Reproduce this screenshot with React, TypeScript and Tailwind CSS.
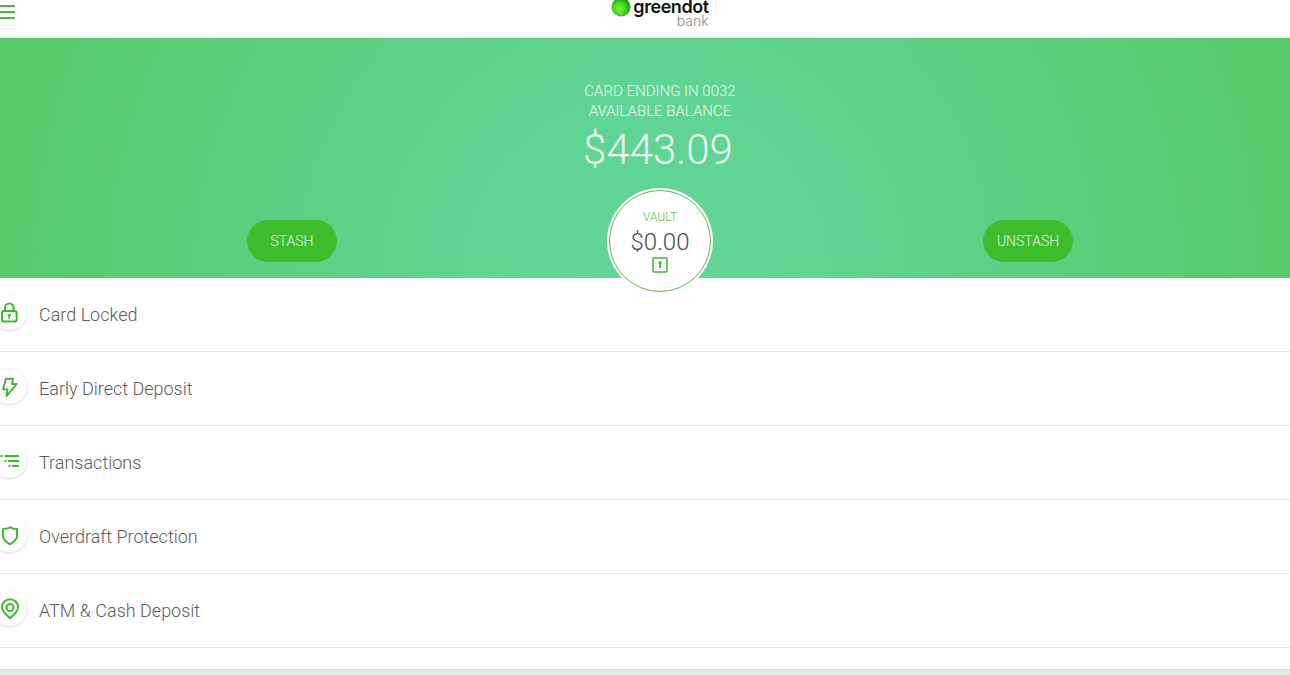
import type { ReactNode } from "react";

function LockIcon() {
  return (
    <svg viewBox="0 0 24 24" className="h-6 w-6" fill="none" stroke="#3cbb2c" strokeWidth="2" aria-hidden="true">
      <rect x="4" y="10" width="14.600" height="10.600" rx="1.800" />
      <path d="M7 10V6.800a4.300 4.300 0 0 1 8.600 0V10" />
      <path d="M9.600 13.200H13v2h-1V18h-1.500v-2.800h-.9z" fill="#3cbb2c" stroke="none" />
    </svg>
  );
}

function BoltIcon() {
  return (
    <svg viewBox="0 0 24 24" className="h-6 w-6" fill="none" stroke="#3cbb2c" strokeWidth="1.900" strokeLinejoin="round" aria-hidden="true">
      <path d="M8 3.800h7l-1 5.200h4.600L8.600 21.200l.8-6.800H5z" />
    </svg>
  );
}

function ListIcon() {
  return (
    <svg viewBox="0 0 24 24" className="h-6 w-6" fill="none" stroke="#3cbb2c" strokeWidth="2" aria-hidden="true">
      <path d="M6.500 7H21M10 12h11M14 17h7" />
      <path d="M2.500 7h2M6.500 12h2M10.500 17h2" />
    </svg>
  );
}

function ShieldIcon() {
  return (
    <svg viewBox="0 0 24 24" className="h-6 w-6" fill="none" stroke="#3cbb2c" strokeWidth="2" strokeLinejoin="round" aria-hidden="true">
      <path d="M12 4.200c-2 1.400-4.200 1.800-7 1.800v6.800c0 4 3.400 6.500 7 8.500 3.600-2 7-4.500 7-8.500V6c-2.800 0-5-.4-7-1.800z" />
    </svg>
  );
}

function PinIcon() {
  return (
    <svg viewBox="0 0 24 24" className="h-6 w-6" fill="none" stroke="#3cbb2c" strokeWidth="2" strokeLinejoin="round" aria-hidden="true">
      <path d="M12 21.400c-2.800-3-8-6.600-8-11.200a8 8 0 0 1 16 0c0 4.600-5.200 8.200-8 11.200z" />
      <circle cx="12" cy="10.600" r="3.500" />
    </svg>
  );
}

function VaultIcon() {
  return (
    <svg viewBox="0 0 16 16" className="h-4 w-4" fill="none" stroke="#3cbb2c" strokeWidth="1.500" aria-hidden="true">
      <rect x="1" y="1" width="14" height="14" rx="1" />
      <path d="M6.300 6a1.700 1.700 0 1 1 3.400 0c0 .6-.5 1-.8 1.200V11H7.100V7.200C6.800 7 6.300 6.600 6.300 6z" fill="#3cbb2c" stroke="none" />
    </svg>
  );
}

function BrandDot() {
  return (
    <svg viewBox="0 0 20 20" className="h-5 w-5" aria-hidden="true">
      <defs>
        <radialGradient id="dot" cx="0.42" cy="0.6" r="0.65">
          <stop offset="0" stopColor="#7df03c" />
          <stop offset="0.5" stopColor="#43d81f" />
          <stop offset="1" stopColor="#178a12" />
        </radialGradient>
      </defs>
      <circle cx="10" cy="10" r="9.500" fill="url(#dot)" />
    </svg>
  );
}

const items: { label: string; icon: ReactNode }[] = [
  { label: "Card Locked", icon: <LockIcon /> },
  { label: "Early Direct Deposit", icon: <BoltIcon /> },
  { label: "Transactions", icon: <ListIcon /> },
  { label: "Overdraft Protection", icon: <ShieldIcon /> },
  { label: "ATM & Cash Deposit", icon: <PinIcon /> },
];

function Header() {
  return (
    <header className="relative flex h-[38px] items-start justify-center bg-white pl-[30px]">
      <button type="button" aria-label="Menu" className="absolute top-[5px] left-0 flex w-[15px] flex-col gap-1">
        <span className="h-0.5 bg-[#4cb83c]" />
        <span className="h-0.5 bg-[#4cb83c]" />
        <span className="h-0.5 bg-[#4cb83c]" />
      </button>
      <a href="#home" className="flex items-start gap-0.5 font-['Inter',sans-serif]">
        <span className="-mt-[3px]">
          <BrandDot />
        </span>
        <span className="flex flex-col items-end">
          <span className="text-[18px] leading-[14px] font-semibold tracking-tight text-[#111]">greendot</span>
          <span className="text-[14px] leading-[14px] font-light text-[#8a8a8a]">bank</span>
        </span>
      </a>
    </header>
  );
}

function PillButton({ children }: { children: ReactNode }) {
  return (
    <button type="button" className="h-[42px] w-[90px] rounded-full bg-[#3dbd2b] text-[14px] font-light text-[#e4fbe0]">
      {children}
    </button>
  );
}

function Hero() {
  return (
    <section className="h-[240px] bg-[radial-gradient(circle_farthest-side_at_bottom,#62d59a_0%,#60d494_25%,#55cb6b_100%)] pl-[30px]">
      <div className="pt-[43px] text-center font-light text-[#e9fbf0]">
        <p className="text-[15px] leading-5">CARD ENDING IN 0032</p>
        <p className="text-[15px] leading-5">AVAILABLE BALANCE</p>
        <p className="pr-1 text-[42px] leading-[58px]">$443.09</p>
      </div>
      <div className="mx-auto mt-[9px] grid max-w-[1104px] grid-cols-3 items-center justify-items-center">
        <PillButton>STASH</PillButton>
        <button type="button" className="h-[106px] w-[106px] rounded-full bg-white p-0.5">
          <span className="flex h-full flex-col items-center rounded-full border border-[#5cba4e] pt-4 font-light">
            <span className="text-[12px] leading-5 text-[#55bd48]">VAULT</span>
            <span className="text-[24px] leading-[30px] text-[#4d4d4d]">$0.00</span>
            <VaultIcon />
          </span>
        </button>
        <PillButton>UNSTASH</PillButton>
      </div>
    </section>
  );
}

export default function App() {
  return (
    <div className="min-h-screen overflow-x-hidden bg-white font-['Roboto',sans-serif]">
      <Header />
      <Hero />
      <nav>
        <ul>
          {items.map((item) => (
            <li key={item.label} className="border-b border-[#e8e8e8]">
              <a href="#account" className="flex h-[73px] items-center gap-3 text-[18px] font-light text-[#5c5c5c]">
                <span className="mb-1 -ml-2 flex h-[35px] w-[35px] items-center justify-center rounded-full shadow-[0_1px_3px_rgba(0,0,0,0.15)]">
                  {item.icon}
                </span>
                {item.label}
              </a>
            </li>
          ))}
        </ul>
      </nav>
      <footer className="mt-[21px] h-1.5 border-t border-[#d3d8d8] bg-[#e6e9e9]" />
    </div>
  );
}
